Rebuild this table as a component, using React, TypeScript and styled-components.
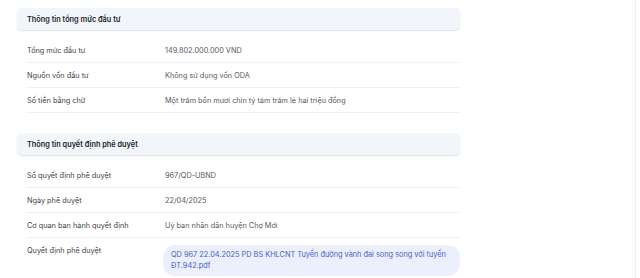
import React from "react";
import styled, { createGlobalStyle } from "styled-components";

const GlobalStyle = createGlobalStyle`
  html, body {
    margin: 0;
    padding: 0;
    background: #ffffff;
  }
  body {
    font-family: Inter, "Noto Sans", sans-serif;
    -webkit-font-smoothing: antialiased;
  }
`;

const Page = styled.div`
  width: 636px;
  height: 278px;
  border-right: 1px solid #eeeff2;
  box-sizing: border-box;
  padding: 8px 0 0 17px;
  overflow: hidden;
`;

const Column = styled.div`
  width: 443px;
  display: flex;
  flex-direction: column;
`;

const Section = styled.section<{ $gap?: number }>`
  display: flex;
  flex-direction: column;
  margin-bottom: ${(p) => p.$gap ?? 0}px;
`;

const SectionHeader = styled.div`
  height: 22px;
  display: flex;
  align-items: center;
  padding: 0 10px;
  background: #f2f5f9;
  border-radius: 5px;
  box-shadow: 0 1px 1.5px rgba(30, 40, 60, 0.14);
  font-size: 7.35px;
  font-weight: 600;
  color: #1f2329;
`;

const Rows = styled.div`
  display: flex;
  flex-direction: column;
  margin-top: 8px;
  padding-left: 10px;
`;

const Row = styled.div<{ $top?: boolean }>`
  display: grid;
  grid-template-columns: 136px 1fr;
  align-items: ${(p) => (p.$top ? "start" : "center")};
  min-height: 25px;
  padding: ${(p) => (p.$top ? "7px 0 6px" : "0")};
  border-bottom: 1px solid #eff1f4;
  box-sizing: border-box;
  font-size: 7.3px;

  &:last-child {
    border-bottom: ${(p) => (p.$top ? "none" : "1px solid #eff1f4")};
  }
`;

const Label = styled.div<{ $top?: boolean }>`
  color: #3b3f45;
  padding-top: ${(p) => (p.$top ? "1px" : "0")};
`;

const Value = styled.div`
  color: #555a61;
  padding-left: 2px;
`;

const FileChip = styled.a`
  display: block;
  background: #ecf0fd;
  color: #3f63c9;
  border-radius: 12px;
  padding: 4px 10px 5px 8px;
  line-height: 11px;
  font-size: 7.35px;
  text-decoration: none;
`;

type Item = { label: string; value?: string; file?: string };

const investment: Item[] = [
  { label: "Tổng mức đầu tư", value: "149.802.000.000 VND" },
  { label: "Nguồn vốn đầu tư", value: "Không sử dụng vốn ODA" },
  {
    label: "Số tiền bằng chữ",
    value: "Một trăm bốn mươi chín tỷ tám trăm lẻ hai triệu đồng",
  },
];

const approval: Item[] = [
  { label: "Số quyết định phê duyệt", value: "967/QD-UBND" },
  { label: "Ngày phê duyệt", value: "22/04/2025" },
  { label: "Cơ quan ban hành quyết định", value: "Uỷ ban nhân dân huyện Chợ Mới" },
  {
    label: "Quyết định phê duyệt",
    file: "QD 967 22.04.2025 PD BS KHLCNT Tuyến đường vành đai song song với tuyến ĐT.942.pdf",
  },
];

function InfoRow({ item }: { item: Item }) {
  if (item.file) {
    return (
      <Row $top>
        <Label $top>{item.label}</Label>
        <FileChip href="#">{item.file}</FileChip>
      </Row>
    );
  }
  return (
    <Row>
      <Label>{item.label}</Label>
      <Value>{item.value}</Value>
    </Row>
  );
}

export default function App() {
  return (
    <Page>
      <GlobalStyle />
      <Column>
        <Section $gap={20}>
          <SectionHeader>Thông tin tổng mức đầu tư</SectionHeader>
          <Rows>
            {investment.map((it) => (
              <InfoRow key={it.label} item={it} />
            ))}
          </Rows>
        </Section>
        <Section>
          <SectionHeader>Thông tin quyết định phê duyệt</SectionHeader>
          <Rows>
            {approval.map((it) => (
              <InfoRow key={it.label} item={it} />
            ))}
          </Rows>
        </Section>
      </Column>
    </Page>
  );
}
